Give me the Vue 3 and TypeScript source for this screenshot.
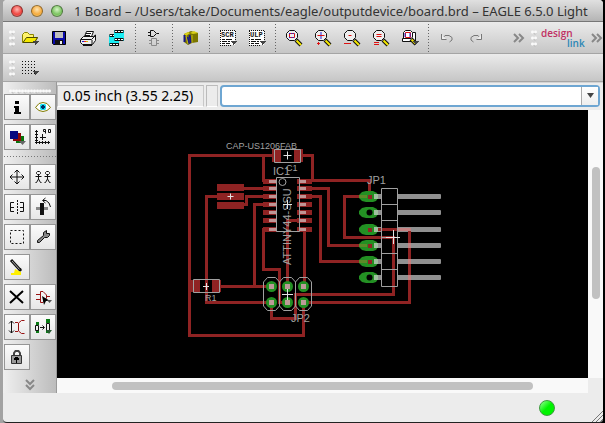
<script setup lang="ts">
import { h, ref, type FunctionalComponent } from 'vue'

interface Shape {
  d?: string
  fill?: string
  stroke?: string
  width?: number
  dash?: string
  text?: string
  x?: number
  y?: number
  size?: number
}

const K = '#111'
const drop: Shape = { d: 'M13 13H19V14H18V15H17V16H16V17H15V15H14V14H13Z', fill: '#444' }
const lens: Shape[] = [
  { d: 'M5.5 2.5H10.5L13.5 5.5V9.5L10.5 12.5H5.5L2.5 9.5V5.5Z', fill: '#eee', stroke: K },
  { d: 'M12 12L17 17', stroke: K, width: 4 },
  { d: 'M12.5 12.5L17 17', stroke: '#f5e800', width: 2 },
]
const page = (label: string): Shape[] => [
  { d: 'M2 3H17V17H2Z', fill: '#fff' },
  { d: 'M2 2.5H18M2 17.5H14M2.5 3V18M17.5 3V13', stroke: K, dash: '1 1' },
  { text: label, x: 3, y: 9, size: 7, fill: K },
  { d: 'M4 11.5H7M8 11.5H14M4 13.5H9M10 13.5H12M4 15.5H7M8 15.5H12', stroke: K },
  drop,
]

const glyphs: Record<string, Shape[]> = {
  open: [
    { d: 'M2.5 14.5V6.5L4.5 4.5H7.5L9.5 6.5H13.5V9.5H17.5L14.5 14.5Z', fill: '#fff36b', stroke: '#8a8500' },
    { d: 'M3 14.5L6.5 9.5H17.5L14.5 14.5Z', fill: '#f4e900', stroke: '#4b4900' },
    drop,
  ],
  save: [
    { d: 'M3.5 3.5H16.5V16.5H4.5L3.5 15.5Z', fill: '#0b0bac', stroke: '#000' },
    { d: 'M6 4H14V10H6Z', fill: '#bdbdbd' },
    { d: 'M6 12H14V17H6Z', fill: '#111' },
    { d: 'M11 13H13V16H11Z', fill: '#eee' },
  ],
  print: [
    { d: 'M6.5 8.5L8.5 3.5H15.5L13.5 8.5', fill: '#fff', stroke: K },
    { d: 'M2.5 11.5L5.5 8.5H15.5L17.5 7V12.5L14.5 16.5H4.5L2.5 14.5Z', fill: '#eee', stroke: K },
    { d: 'M3 11.5H13.5L17 8M14 12V16M8 5.5H13M7 7.5H12M5 17.5H14', stroke: K },
    { d: 'M6 13.5H8', stroke: '#e22' },
    { d: 'M8 13.5H10', stroke: '#db0' },
    { d: 'M4 13.5H6', stroke: '#22c' },
  ],
  film: [
    { d: 'M7 2H17V13H12V18H2V7H7Z', fill: '#19eef5' },
    { d: 'M7.5 3.5H16.5M7.5 11.5H16.5M2.5 7.5H7M2.5 16.5H12', stroke: '#111', width: 3 },
    { d: 'M8 3.5H17M8 11.5H17M3 7.5H7M3 16.5H12', stroke: '#fff', dash: '2 1' },
  ],
  gate: [
    { d: 'M6.5 2.5H9.5L12.5 5.5L9.5 8.5H6.5ZM4 4.5H6M4 7.5H6M13 5.5H15', stroke: K },
    { d: 'M7.5 10.5H12.5V17.5H7.5ZM5 12.5H7M5 15.5H7M13 12.5H15M13 15.5H15', stroke: '#8a8a8a' },
  ],
  library: [
    { d: 'M3 6L10 3L17 5V14L11 15L7 17L3 14Z', fill: '#7b7600' },
    { d: 'M3 6L7 4L9 5L5 8ZM9 5L13 3L17 5L12 6Z', fill: '#d9cf18' },
    { d: 'M3.5 7V14M6.5 9L8 16M8.5 7L10 15', stroke: '#181883', width: 2 },
    { d: 'M5 8L7 16M11 7V15', stroke: '#c8bd13' },
  ],
  script: page('SCR'),
  ulp: page('ULP'),
  fit: [...lens, { d: 'M5.5 5.5H10.5V9.5H5.5Z', stroke: '#d11' }, { d: 'M5 5.5H11M5 9.5H11', stroke: '#22d', dash: '1 1' }],
  zoomin: [...lens, { d: 'M8 4V11', stroke: '#22d', width: 1 }, { d: 'M4.5 7.5H11.5M4 15.5H7M5.5 14V17', stroke: '#d11' }],
  zoomout: [...lens, { d: 'M6.5 7.5H9.5M2 15.5H9', stroke: '#d11' }],
  redraw: [...lens, { d: 'M5.5 6.5H10.5M5.5 8.5H10.5M3 14.5H8M3 16.5H8', stroke: '#d11' }],
  select: [
    { d: 'M5.5 2.5H10.5L12.5 4.5H15.5V13.5H2.5V10.5H3.5V4.5Z', fill: '#fff', stroke: K },
    { d: 'M5.5 4.5H10.5V9.5H5.5Z', stroke: '#d11' },
    { d: 'M5 5V9M10 5V9', stroke: '#22d' },
    { d: 'M3 10.5H11L12.5 9V5', stroke: K },
    { d: 'M11 11L16 16', stroke: K, width: 4 },
    { d: 'M11.5 11.5L15.5 15.5', stroke: '#e9dc00', width: 2 },
    drop,
  ],
  undo: [{ d: 'M4.5 6V11.5H9.5M5 11L8 7.5H12L15 9.5V12L12.5 14', stroke: '#777' }, { d: 'M5 7V11H9Z', fill: '#eee' }],
  redo: [{ d: 'M15.5 6V11.5H10.5M15 11L12 7.5H8L5 9.5V12L7.5 14', stroke: '#777' }, { d: 'M15 7V11H11Z', fill: '#eee' }],
  grid: [
    ...[4, 7, 10, 13, 16].map((y) => ({ d: `M2 ${y - 0.5}H17`, stroke: K, dash: '1 2' })),
    drop,
  ],
  info: [{ d: 'M8 4H12V7H8ZM7 9H12V15H14V17H7V15H8V11H7Z', fill: '#000' }],
  show: [
    { d: 'M2.5 10.5L6 6.5L10 5.5L14 6.5L17.5 10.5L14 13.5L10 14.5L6 13.5Z', fill: '#fff', stroke: '#827c00' },
    { d: 'M8 7H12L13 8V12L12 13H8L7 12V8Z', fill: '#16dff0' },
    { d: 'M9 8H11V12H9ZM8 9H12V11H8Z', fill: '#003064' },
  ],
  layers: [
    { d: 'M9 9H17V16H9Z', fill: '#07740c' },
    { d: 'M6 6H14V14H6Z', fill: '#8b0909' },
    { d: 'M3 4H11V12H3Z', fill: '#08087f' },
    { d: 'M12 14H19L15.5 18Z', fill: '#666' },
  ],
  mark: [
    { d: 'M3.5 3V17M2 15.5H17M2 4.5H5M2 7.5H5M2 10.5H5M2 13.5H5M6.5 14V17M9.5 14V17M12.5 14V17M15.5 14V17M9.5 7V13M7 10.5H13', stroke: K },
    { d: 'M10.5 2.5H12.5V6.5M10.5 2.5V4.5H12.5M15.5 2.5H17.5V5.5H15.5Z', stroke: K },
  ],
  move: [{ d: 'M10 3V17M3 10H17M7.5 5.5L10 3L12.5 5.5M7.5 14.5L10 17L12.5 14.5M5.5 7.5L3 10L5.5 12.5M14.5 7.5L17 10L14.5 12.5', stroke: K }],
  copy: [3.5, 12.5].map((x) => ({
    d: `M${x + 1} 4.5H${x + 3}L${x + 4} 5.5V6.5L${x + 3} 7.5H${x + 1}L${x} 6.5V5.5ZM${x + 2} 8V12M${x - 1} 9.5H${x + 5}M${x + 2} 12L${x} 15.5H${x - 1}M${x + 2} 12L${x + 4} 15.5H${x + 5}`,
    stroke: K,
  })),
  mirror: [
    { d: 'M7 5.5H3.5V14.5H7M3.5 10.5H7M13 5.5H16.5V14.5H13M16.5 10.5H13', stroke: K },
    { d: 'M10.5 3V17', stroke: K, dash: '2 1' },
  ],
  rotate: [
    { d: 'M3 10H15V13H3Z', fill: '#888' },
    { d: 'M7 6H11V18H7Z', fill: '#111' },
    { d: 'M10 3.5H13L16 6L17.5 10M12.5 1L9.5 3.5L12.5 6', stroke: K },
  ],
  group: [{ d: 'M3.5 3.5H16.5V16.5H3.5Z', stroke: K, dash: '2 2' }],
  change: [{ d: 'M10.5 5.5L13.5 3.5V6.5H16.5V8.5L14.5 10.5H11.5L6.5 15.5H4.5V13.5L10.5 8.5Z', fill: '#888', stroke: K }],
  paste: [
    { d: 'M4 3L14 14', stroke: '#111', width: 3 },
    { d: 'M5 4L13 13', stroke: '#aaa' },
    { d: 'M8 12L14 15V18H4V16H7Z', fill: '#fff000' },
    { d: 'M12 14L14 11', stroke: K },
  ],
  delete: [{ d: 'M3 4L16 16M16 4L3 16', stroke: '#000', width: 2 }],
  add: [
    { d: 'M7.5 4.5H10L13.5 8V11L10 15.5H7.5ZM3 7.5H7M3 12.5H7M14 9.5H17', stroke: '#981212' },
    { d: 'M9 9L17 14H13L11 18Z', fill: '#000' },
    { d: 'M14 13H19L16.5 16Z', fill: '#555' },
  ],
  pinswap: [
    { d: 'M4.5 4V16M2 6.5L4.5 4L7 6.5M2 13.5L4.5 16L7 13.5', stroke: K },
    { d: 'M17.5 3.5H14.5L11.5 6V14L14.5 16.5H17.5M8 5.5H11M8 14.5H11', stroke: '#981212' },
  ],
  replace: [
    { d: 'M3 5H6V8H3ZM3 13H6V16H3ZM13 2H17V6H13ZM13 13H17V16H13Z', fill: '#0a7a15' },
    { d: 'M2.5 8.5H5.5V13.5H2.5ZM13.5 6.5H16.5V13.5H13.5ZM7 10.5H11M9.5 8.5L11.5 10.5L9.5 12.5', stroke: K },
    { d: 'M13 13H19L16 17Z', fill: '#265a30' },
  ],
  lock: [
    { d: 'M7 9V6L8.5 4H11.5L13 6V9', stroke: '#444', width: 2 },
    { d: 'M4.5 8.5H14.5V16.5H4.5Z', fill: '#999', stroke: '#333' },
    { d: 'M8 10H11V11H12V13H10V16H9V13H7V11H8Z', fill: '#000' },
  ],
}

const Glyph: FunctionalComponent<{ name: string }> = (props) =>
  h(
    'svg',
    { viewBox: '0 0 20 20', width: 20, height: 20, 'aria-hidden': 'true' },
    glyphs[props.name].map((s) =>
      s.text
        ? h('text', { x: s.x, y: s.y, 'font-size': s.size, 'font-weight': 700, 'font-family': 'Liberation Mono, monospace', fill: s.fill }, s.text)
        : h('path', { d: s.d, fill: s.fill ?? 'none', stroke: s.stroke ?? 'none', 'stroke-width': s.width ?? 1, 'stroke-dasharray': s.dash }),
    ),
  )
Glyph.props = ['name']

const toolbar = [
  ['open', 'save', 'print', 'film'],
  ['gate'],
  ['library'],
  ['script', 'ulp'],
  ['fit', 'zoomin', 'zoomout', 'redraw', 'select'],
  ['undo', 'redo'],
]
const tools = [
  ['info', 'show', 'layers', 'mark'],
  ['move', 'copy', 'mirror', 'rotate', 'group', 'change', 'paste', '', 'delete', 'add', 'pinswap', 'replace', 'lock'],
]
const command = ref('')

const traces = [
  'M272 155.5H189.5V335.5H303.5V302',
  'M263.5 155.5V180.5H268',
  'M303 155.5H312.5V180.5H369.5V196',
  'M306 180.5H313',
  'M244 188.5H268',
  'M243 205V204.5H246.5V196.5H268',
  'M218 196.5H206.5V302.5H271',
  'M268 204.5H254.5V286.5',
  'M220 286.5H271',
  'M268 229.5H263.5V269.5H279.5V302.5H287',
  'M300 220.5H287.5V286',
  'M304.5 229.5V286',
  'M271.5 302.5V318.5H295.5V294.5H393.5V237.5H344.5V196.5H369',
  'M303 302.5H409.5V229.5H369',
  'M306 188.5H328.5V245.5H369',
  'M306 196.5H320.5V261.5H369',
]
const icRows = [181, 188, 196, 204, 212, 220, 229]
const pins = [
  { y: 196, fromLeft: true, wired: true },
  { y: 212, fromLeft: false, wired: false },
  { y: 229, fromLeft: false, wired: true },
  { y: 245, fromLeft: true, wired: true },
  { y: 261, fromLeft: true, wired: true },
  { y: 277, fromLeft: false, wired: false },
]
const pads = [271, 287, 303].flatMap((x) => [286, 302].map((y) => ({ x, y })))
</script>

<template>
  <main class="window">
    <header class="title">
      <button class="light red" aria-label="Close"></button>
      <button class="light amber" aria-label="Minimize"></button>
      <button class="light green" aria-label="Zoom"></button>
      <h1>1 Board – /Users/take/Documents/eagle/outputdevice/board.brd – EAGLE 6.5.0 Light</h1>
    </header>

    <nav class="bar" aria-label="Actions">
      <span class="grip"></span>
      <template v-for="(group, g) in toolbar" :key="g">
        <span v-if="g" class="divider"></span>
        <button v-for="name in group" :key="name" class="action" :aria-label="name"><Glyph :name="name" /></button>
      </template>
      <span class="spring"></span>
      <button class="more" aria-label="More actions">
        <svg width="12" height="10" viewBox="0 0 12 10"><path d="M1 1L5 5L1 9M6 1L10 5L6 9" /></svg>
      </button>
      <span class="grip"></span>
      <a class="brand" href="#">
        <svg width="44" height="22" viewBox="0 0 44 22">
          <text x="0" y="10" class="pink">design</text>
          <text x="26" y="20" class="blue">link</text>
        </svg>
      </a>
      <button class="more last" aria-label="More links">
        <svg width="12" height="10" viewBox="0 0 12 10"><path d="M1 1L5 5L1 9M6 1L10 5L6 9" /></svg>
      </button>
    </nav>

    <nav class="bar second" aria-label="Grid">
      <span class="grip"></span>
      <button class="action" aria-label="grid"><Glyph name="grid" /></button>
    </nav>

    <div class="workspace">
      <aside class="tools">
        <span class="grip wide"></span>
        <div v-for="(group, g) in tools" :key="g" class="group">
          <template v-for="(name, i) in group" :key="i">
            <button v-if="name" class="tool" :aria-label="name"><Glyph :name="name" /></button>
            <span v-else></span>
          </template>
        </div>
        <button class="more down" aria-label="More tools">
          <svg width="10" height="12" viewBox="0 0 10 12"><path d="M1 1L5 5L9 1M1 6L5 10L9 6" /></svg>
        </button>
      </aside>

      <section class="editor">
        <div class="entry">
          <output class="coords">0.05 inch (3.55 2.25)</output>
          <span class="cell"></span>
          <div class="combo">
            <input v-model="command" type="text" aria-label="Command" />
            <button aria-label="Command history"><svg width="7" height="5" viewBox="0 0 7 5"><path d="M0 0H7L3.5 5Z" /></svg></button>
          </div>
        </div>
        <div class="view">
          <div class="canvas">
            <svg class="board" viewBox="57 110 531 268" preserveAspectRatio="xMinYMin meet" role="img" aria-label="Board layout">
              <g class="pins">
                <rect v-for="p in pins" :key="p.y" x="397" :y="p.y - 2" width="44" height="5" rx="1" />
                <rect v-for="p in pins" :key="'s' + p.y" x="377" :y="p.y - 2" width="4" height="5" />
              </g>
              <path v-for="d in traces" :key="d" class="trace" :d="d" />
              <path class="overlap" d="M398 229.5H411M409.5 243V248M409.5 259V264M409.5 275V280" />
              <g class="copper">
                <path d="M272 149H281V162H272ZM294 149H303V162H294ZM191 280H200V292H191ZM212 280H221V292H212Z" />
                <path d="M217 184H244V191H217ZM217 193H244V200H217ZM217 202H244V209H217Z" />
                <template v-for="y in icRows" :key="y">
                  <rect x="263" :y="y - 2" width="14" height="5" />
                  <rect x="297" :y="y - 2" width="15" height="5" />
                </template>
              </g>
              <g class="ends">
                <template v-for="y in icRows" :key="y">
                  <rect x="269" :y="y - 1" width="7" height="3" />
                  <rect x="300" :y="y - 1" width="6" height="3" />
                </template>
              </g>
              <g v-for="p in pads" :key="p.x + '-' + p.y">
                <circle class="pad" :cx="p.x + 0.5" :cy="p.y + 0.5" r="5.5" />
                <rect class="drill" :x="p.x - 2" :y="p.y - 2" width="5" height="5" />
              </g>
              <g v-for="p in pins" :key="'p' + p.y">
                <path
                  class="pad"
                  :d="`M359 ${p.y - 1}L362 ${p.y - 4}L366 ${p.y - 5}H373L377 ${p.y - 3}L378 ${p.y}V${p.y + 2}L376 ${p.y + 5}L373 ${p.y + 6}H366L362 ${p.y + 5}L359 ${p.y + 2}Z`"
                />
                <path v-if="p.fromLeft" class="under" :d="`M359 ${p.y + 0.5}H367`" />
                <rect v-if="p.wired" class="core" x="368" :y="p.y - 1" width="4" height="4" />
                <circle v-else class="hole" cx="369.5" :cy="p.y + 0.5" r="3" />
                <rect class="shine" x="374" :y="p.y - 2" width="4" height="5" />
              </g>
              <g class="outline">
                <path d="M274.5 149.5H300.5V162.5H274.5ZM193.5 279.5H219.5V292.5H193.5ZM276.5 177.5H299.5V231.5H276.5Z" />
                <circle cx="282.5" cy="182" r="3.5" />
                <path d="M381.5 188.5H397.5V286.5H381.5ZM381.5 204.5H397.5M381.5 220.5H397.5M381.5 237.5H397.5M381.5 253.5H397.5M381.5 269.5H397.5" />
                <path v-for="x in [263.5, 279.5, 295.5]" :key="x" :d="`M${x} 282V306L${x + 4} 310.5H${x + 12}L${x + 16} 306V282L${x + 12} 277.5H${x + 4}Z`" />
              </g>
              <g class="names">
                <text x="226" y="149" class="small">CAP-US1206FAB</text>
                <text x="286" y="171" class="small">C1</text>
                <text x="273" y="175">IC1</text>
                <text x="205" y="301" class="small">R1</text>
                <text x="367" y="184">JP1</text>
                <text x="291" y="322">JP2</text>
                <text transform="translate(291 265) rotate(-90)">ATTINY44-SSU</text>
              </g>
              <path class="origins" d="M283.5 155.5H291.5M287.5 151.5V159.5M227.5 196.5H233.5M230.5 193.5V199.5M203 286.5H209M206.5 283V290M283 204.5H292M287.5 200V209M282 294.5H293M287.5 289V300M386 237.5H400M393.5 230V244" />
            </svg>
          </div>
          <div class="track vertical"><span class="thumb"></span></div>
        </div>
        <div class="track horizontal"><span class="thumb"></span></div>
      </section>
    </div>

    <footer class="status">
      <span class="lamp"></span>
      <svg class="resize" width="12" height="12" viewBox="0 0 12 12"><path d="M1 12L12 1M5 12L12 5M9 12L12 9" /></svg>
    </footer>
  </main>
</template>

<style>
body {
  background: linear-gradient(90deg, #a2a2a2 0 50%, #000 50%);
}
</style>

<style scoped>
.window {
  box-sizing: border-box;
  min-height: 100vh;
  margin: 0 2px 0 3px;
  display: flex;
  flex-direction: column;
  background: #ececec;
  border-bottom: 1px solid #222;
  border-radius: 4px;
  overflow: hidden;
  font-family: "Noto Sans", "Open Sans", sans-serif;
  color: #111;
}
button {
  padding: 0;
  border: 0;
  background: none;
  font: inherit;
}
svg {
  display: block;
}
.title {
  box-sizing: border-box;
  height: 22px;
  display: flex;
  align-items: center;
  gap: 8px;
  padding: 0 8px;
  background: linear-gradient(#e0e0e0, #b4b4b4);
  border-bottom: 1px solid #777;
}
.title h1 {
  margin: 0 0 0 3px;
  font-size: 13px;
  line-height: 20px;
  font-weight: 400;
  white-space: nowrap;
  color: #333;
}
.light {
  box-sizing: border-box;
  flex: none;
  width: 12px;
  height: 12px;
  border-radius: 50%;
  border: 1px solid #0006;
}
.red { background: radial-gradient(circle at 50% 35%, #ffb6b0, #ee443f 60%, #f79a92); }
.amber { background: radial-gradient(circle at 50% 35%, #ffe4b0, #f5aa3c 60%, #fbe08e); }
.green { background: radial-gradient(circle at 50% 35%, #d5f5c4, #79c25f 60%, #c5f0a5); }
.bar {
  box-sizing: border-box;
  height: 32px;
  display: flex;
  align-items: center;
  background: linear-gradient(#ebebeb, #c6c6c6);
  border-bottom: 1px solid #a5a5a5;
}
.second {
  height: 28px;
}
.grip {
  flex: none;
  width: 6px;
  height: 18px;
  margin: 0 0 0 6px;
  background:
    radial-gradient(circle, #fafafa 1px, transparent 2px) 0 0 / 3px 6px,
    radial-gradient(circle, #bbb 1px, transparent 2px) 1px 1px / 6px 6px;
}
.action {
  flex: none;
  width: 29px;
  height: 28px;
  display: grid;
  place-items: center;
}
.divider {
  flex: none;
  width: 8px;
  height: 28px;
  background: repeating-linear-gradient(#666 0 1px, transparent 1px 3px) center / 1px 100% no-repeat;
}
.spring {
  flex: 1;
}
.more path {
  fill: none;
  stroke: #888;
  stroke-width: 2;
}
.last {
  margin: 0 0 0 6px;
}
.brand {
  margin: 0 0 0 4px;
  font-family: "Open Sans", sans-serif;
  font-size: 10px;
  font-weight: 600;
}
.pink { fill: #c02f62; }
.blue { fill: #2a86b5; }
.workspace {
  flex: 1;
  display: flex;
}
.tools {
  box-sizing: border-box;
  flex: none;
  width: 54px;
  display: flex;
  flex-direction: column;
  padding: 6px 0 2px 1px;
  background: linear-gradient(90deg, #efefef, #bcbcbc);
  border-right: 1px solid #999;
}
.wide {
  width: 42px;
  height: 6px;
  margin: 0 5px;
}
.group {
  display: grid;
  grid-template-columns: 26px 26px;
  row-gap: 4px;
}
.group + .group {
  margin: 6px 0 0;
  padding: 8px 0 0;
  background: repeating-linear-gradient(90deg, #777 0 1px, transparent 1px 3px) 0 0 / 100% 1px no-repeat;
}
.tool {
  box-sizing: border-box;
  height: 26px;
  display: grid;
  place-items: center;
  border: 1px solid #959595;
  background: linear-gradient(#fbfbfb, #e6e6e6);
}
.down {
  margin: auto auto 0;
}
.editor {
  flex: 1;
  min-width: 0;
  display: flex;
  flex-direction: column;
}
.entry {
  display: flex;
  align-items: center;
  gap: 2px;
  height: 28px;
  box-sizing: border-box;
  padding: 0 3px 2px 0;
  border-top: 1px solid #d4d4d4;
}
.coords, .cell {
  box-sizing: border-box;
  height: 22px;
  border: 1px solid #bbb;
  border-right-color: #c8c8c8;
  border-bottom-color: #fff;
}
.coords {
  width: 147px;
  padding: 0 5px;
  font-size: 14px;
  line-height: 20px;
  white-space: nowrap;
  color: #000;
}
.cell {
  width: 12px;
}
.combo {
  flex: 1;
  display: flex;
  height: 22px;
  box-sizing: border-box;
  border: 2px solid #6ea6d2;
  border-radius: 4px;
  background: #fff;
}
.combo input {
  flex: 1;
  min-width: 0;
  padding: 0 4px;
  border: 0;
  outline: 0;
  background: none;
  font: inherit;
  font-size: 13px;
}
.combo button {
  width: 17px;
  display: grid;
  place-items: center;
  border-left: 1px solid #aaa;
  background: linear-gradient(#fff, #eee);
}
.combo path {
  fill: #444;
}
.view {
  flex: 1;
  display: flex;
}
.canvas {
  flex: 1;
  min-width: 0;
  background: #000;
}
.board {
  width: 100%;
}
.track {
  flex: none;
  display: flex;
  background: #f9f9f9;
}
.thumb {
  background: #c1c1c1;
  border-radius: 4px;
}
.vertical {
  width: 15px;
  flex-direction: column;
  padding: 57px 3px 79px 4px;
  box-sizing: border-box;
}
.vertical .thumb, .horizontal .thumb {
  flex: 1;
}
.horizontal {
  height: 15px;
  box-sizing: border-box;
  margin: 0 15px 0 0;
  padding: 4px 55px 3px 55px;
}
.status {
  height: 29px;
  display: flex;
  align-items: center;
  justify-content: flex-end;
  gap: 36px;
}
.lamp {
  box-sizing: border-box;
  width: 16px;
  height: 16px;
  border-radius: 50%;
  border: 1px solid #3c9a3c;
  background: linear-gradient(135deg, #9dff9d, #00f400 50%);
}
.resize {
  align-self: flex-end;
}
.resize path {
  stroke: #777;
}
.trace {
  fill: none;
  stroke: #8f2323;
  stroke-width: 3;
}
.overlap {
  fill: none;
  stroke: #c48282;
  stroke-width: 3;
}
.copper { fill: #8f2323; }
.pins { fill: #909090; }
.ends { fill: #c09595; }
.pad { fill: #239023; }
.drill { fill: #bc9a98; }
.hole { fill: #000; }
.core { fill: #8f2323; }
.under { stroke: #5c8a28; stroke-width: 3; }
.shine { fill: #9fc09f; }
.outline {
  fill: none;
  stroke: #a0a0a0;
}
.names {
  fill: #a0a0a0;
  font-family: "Liberation Sans", sans-serif;
  font-size: 11px;
}
.names .small {
  font-size: 9px;
}
.origins {
  stroke: #e4e4e4;
}
</style>
